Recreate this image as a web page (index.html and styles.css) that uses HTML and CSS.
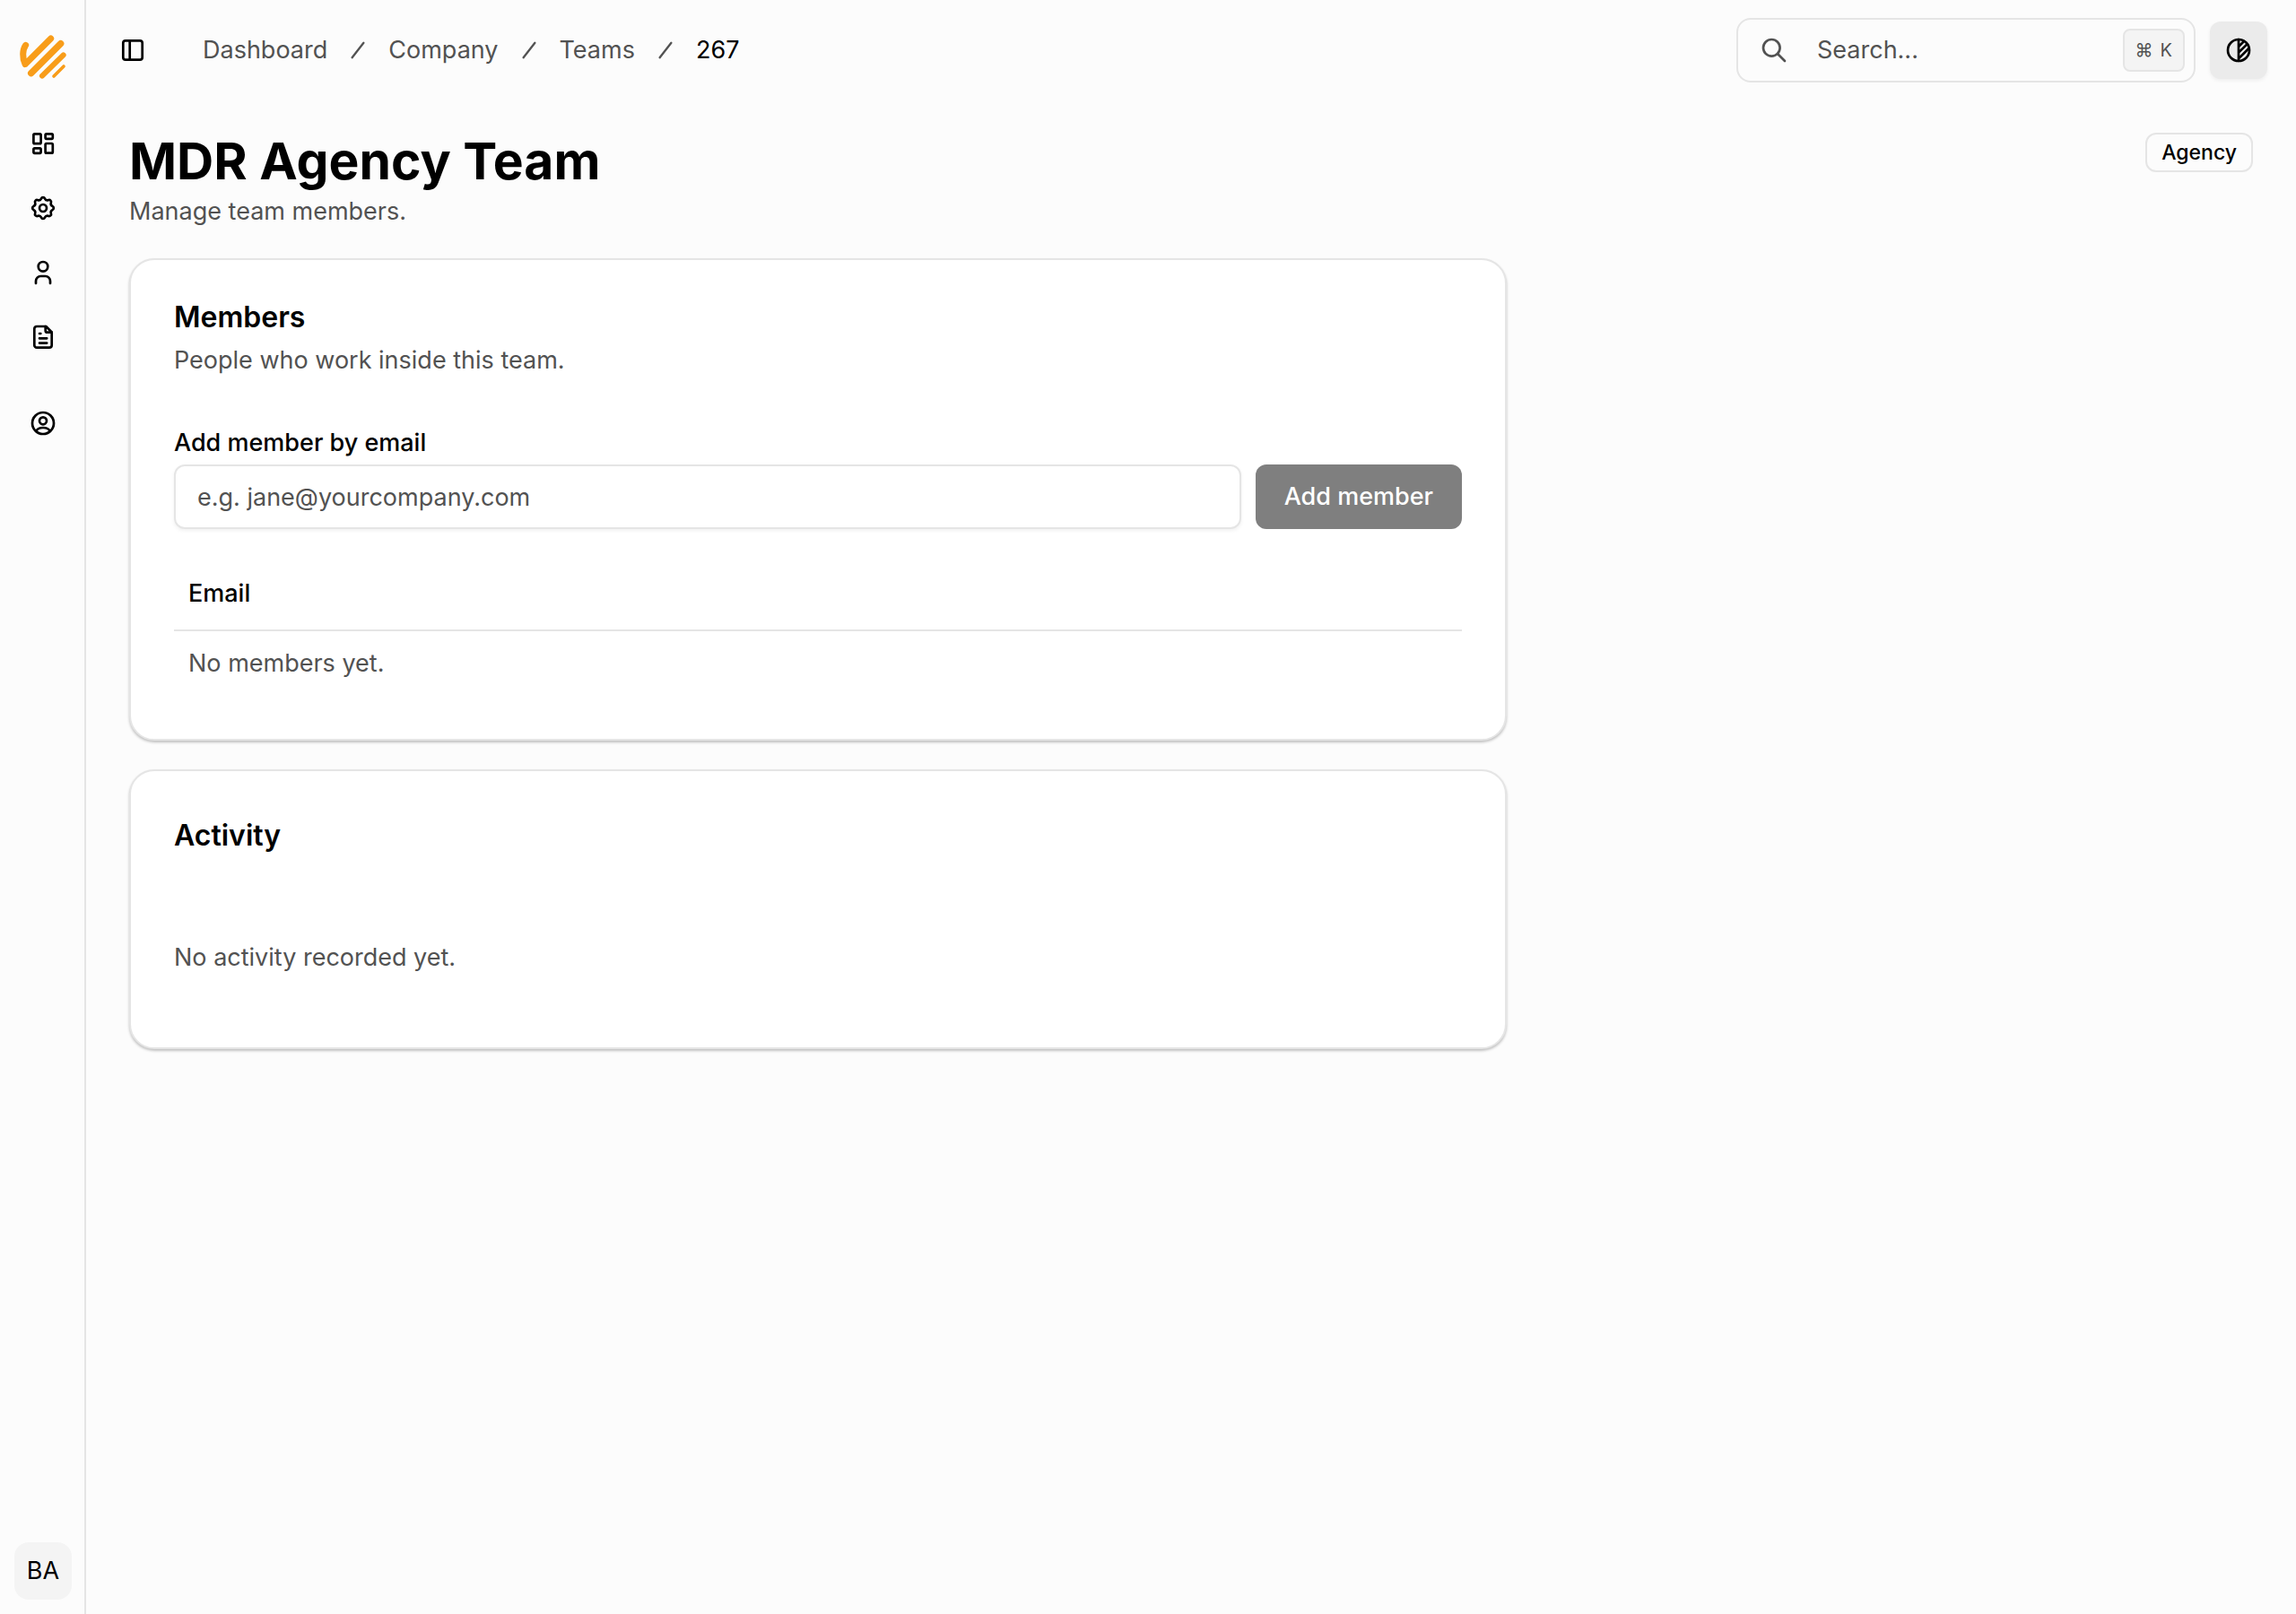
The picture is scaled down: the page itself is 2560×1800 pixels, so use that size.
FILE: index.html
```html
<!DOCTYPE html>
<html lang="en">
<head>
    <meta charset="UTF-8">
    <meta name="viewport" content="width=device-width, initial-scale=1.0">
    <title>MDR Agency Team</title>
    <link rel="stylesheet" href="styles.css">
</head>
<body>
    <!-- Sidebar -->
    <aside class="sidebar">
        <a class="logo" href="#" aria-label="Home">
            <svg viewBox="60 50 168 160" fill="none" stroke="currentColor" stroke-linecap="round" stroke-linejoin="round">
                <path stroke-width="21" d="M86 92C75 108 74 134 84 156L170 70"/>
                <path stroke-width="22" d="M203 87L104 186"/>
                <path stroke-width="18" d="M212 125L141 195"/>
                <path stroke-width="11" d="M213 163L180 196"/>
            </svg>
        </a>
        <nav class="side-nav">
            <a href="#" aria-label="Dashboard">
                <svg class="icon" viewBox="0 0 32 32">
                    <rect x="5.4" y="5.4" width="8.2" height="10.7" rx="1.2"/>
                    <rect x="18.6" y="5.4" width="8.2" height="5.4" rx="1.2"/>
                    <rect x="18.6" y="16" width="8.2" height="10.7" rx="1.2"/>
                    <rect x="5.4" y="21.4" width="8.2" height="5.4" rx="1.2"/>
                </svg>
            </a>
            <a href="#" aria-label="Settings">
                <svg class="icon" viewBox="0 0 24 24" stroke-width="2">
                    <path d="M10.44 4.15A1.7 1.7 0 0 1 13.56 4.15A2.4 2.4 0 0 0 16.44 5.35A1.7 1.7 0 0 1 18.65 7.56A2.4 2.4 0 0 0 19.85 10.44A1.7 1.7 0 0 1 19.85 13.56A2.4 2.4 0 0 0 18.65 16.44A1.7 1.7 0 0 1 16.44 18.65A2.4 2.4 0 0 0 13.56 19.85A1.7 1.7 0 0 1 10.44 19.85A2.4 2.4 0 0 0 7.56 18.65A1.7 1.7 0 0 1 5.35 16.44A2.4 2.4 0 0 0 4.15 13.56A1.7 1.7 0 0 1 4.15 10.44A2.4 2.4 0 0 0 5.35 7.56A1.7 1.7 0 0 1 7.56 5.35A2.4 2.4 0 0 0 10.44 4.15Z"/>
                    <circle cx="12" cy="12" r="3"/>
                </svg>
            </a>
            <a href="#" aria-label="Users">
                <svg class="icon" viewBox="0 0 32 32">
                    <circle cx="16" cy="9.3" r="5.3"/>
                    <path d="M8 28v-2.6a5.4 5.4 0 0 1 5.4-5.4h5.2a5.4 5.4 0 0 1 5.4 5.4V28"/>
                </svg>
            </a>
            <a href="#" aria-label="Documents">
                <svg class="icon" viewBox="0 0 32 32">
                    <path d="M18.7 4v4.7a2 2 0 0 0 2 2h4.9"/>
                    <path d="M9 4h10.3l6.4 6.5V25a2.7 2.7 0 0 1-2.7 2.7H9A2.7 2.7 0 0 1 6.3 25V6.7A2.7 2.7 0 0 1 9 4z"/>
                    <path d="M12 12h1.3M12 17.3h8.2M12 22.6h8.2"/>
                </svg>
            </a>
            <a class="account" href="#" aria-label="Account">
                <svg class="icon" viewBox="0 0 32 32">
                    <circle cx="16" cy="16" r="12"/>
                    <circle cx="16" cy="13.3" r="4"/>
                    <path d="M8.3 25c1.2-3 4-4 7.7-4s6.5 1 7.7 4"/>
                </svg>
            </a>
        </nav>
        <button class="avatar">BA</button>
    </aside>

    <div class="page">
        <header class="topbar">
            <button class="toggle" aria-label="Toggle sidebar">
                <svg class="icon" viewBox="0 0 32 32">
                    <rect x="5.3" y="5.3" width="21.4" height="21.4" rx="2.7"/>
                    <path d="M12.7 5.3v21.4"/>
                </svg>
            </button>
            <nav class="breadcrumb" aria-label="Breadcrumb">
                <a href="#">Dashboard</a>
                <svg class="slash" viewBox="0 0 24 24"><path d="M17.5 5L6.5 19"/></svg>
                <a href="#">Company</a>
                <svg class="slash" viewBox="0 0 24 24"><path d="M17.5 5L6.5 19"/></svg>
                <a href="#">Teams</a>
                <svg class="slash" viewBox="0 0 24 24"><path d="M17.5 5L6.5 19"/></svg>
                <span class="current">267</span>
            </nav>
            <div class="search">
                <label for="search" aria-label="Search">
                    <svg class="icon" viewBox="0 0 32 32">
                        <circle cx="13.3" cy="13.3" r="9.3"/>
                        <path d="M28 28l-8-8"/>
                    </svg>
                </label>
                <input type="text" id="search" placeholder="Search...">
                <kbd><span>⌘</span><span>K</span></kbd>
            </div>
            <button class="theme" aria-label="Toggle theme">
                <svg class="icon" viewBox="0 0 24 24" stroke-width="2">
                    <circle cx="12" cy="12" r="9"/>
                    <path d="M12 3v18M12 14l7-7M12 19l8.5-8.5M12 9l4.5-4.5"/>
                </svg>
            </button>
        </header>

        <main class="content">
            <div class="page-head">
                <div>
                    <h1>MDR Agency Team</h1>
                    <p class="muted">Manage team members.</p>
                </div>
                <span class="badge">Agency</span>
            </div>

            <!-- Members -->
            <section class="card">
                <h2>Members</h2>
                <p class="muted description">People who work inside this team.</p>
                <form class="member-form">
                    <label for="email">Add member by email</label>
                    <div class="form-row">
                        <input type="email" id="email" placeholder="e.g. jane@yourcompany.com">
                        <button type="submit" disabled>Add member</button>
                    </div>
                </form>
                <table class="members">
                    <thead>
                        <tr><th>Email</th></tr>
                    </thead>
                    <tbody>
                        <tr><td>No members yet.</td></tr>
                    </tbody>
                </table>
            </section>

            <!-- Activity -->
            <section class="card activity">
                <h2>Activity</h2>
                <p class="muted empty">No activity recorded yet.</p>
            </section>
        </main>
    </div>
</body>
</html>
```
FILE: styles.css
```css
* {
    box-sizing: border-box;
}
body {
    margin: 0;
    min-height: 100vh;
    display: flex;
    font-family: Inter, "Liberation Sans", sans-serif;
    font-size: 27px;
    line-height: 40px;
    color: #000;
    background-color: #fcfcfc;
}
h1, h2, p {
    margin: 0;
}
a {
    color: inherit;
    text-decoration: none;
}
button, input {
    font: inherit;
    color: inherit;
}
button {
    border: none;
    padding: 0;
    cursor: pointer;
}
.icon {
    display: block;
    width: 32px;
    height: 32px;
    fill: none;
    stroke: #000;
    stroke-linecap: round;
    stroke-linejoin: round;
}
.icon[viewBox="0 0 32 32"] {
    stroke-width: 2.7;
}
.muted {
    color: #525252;
}

/* Sidebar */
.sidebar {
    width: 96px;
    height: 100vh;
    position: sticky;
    top: 0;
    flex-shrink: 0;
    display: flex;
    flex-direction: column;
    align-items: center;
    padding: 36px 0 16px 2px;
    border-right: 2px solid #e5e5e5;
}
.logo {
    color: #f89d1a;
}
.logo svg {
    display: block;
    width: 56px;
    height: 54px;
}
.side-nav {
    display: flex;
    flex-direction: column;
    gap: 8px;
    margin-top: 38px;
}
.side-nav a {
    padding: 16px;
}
.side-nav .account {
    margin-top: 24px;
}
.avatar {
    width: 64px;
    height: 64px;
    margin-top: auto;
    border-radius: 16px;
    background-color: #f4f4f4;
}

/* Top bar */
.page {
    flex: 1;
    min-width: 0;
}
.topbar {
    display: flex;
    align-items: center;
    height: 112px;
    padding: 0 32px 0 36px;
}
.toggle {
    background: none;
}
.breadcrumb {
    display: flex;
    align-items: center;
    gap: 20px;
    margin-left: 62px;
    color: #525252;
}
.breadcrumb .current {
    color: #000;
}
.slash {
    width: 28px;
    height: 28px;
    fill: none;
    stroke: #525252;
    stroke-width: 2;
    stroke-linecap: round;
}
.search {
    display: flex;
    align-items: center;
    width: 512px;
    height: 72px;
    margin-left: auto;
    padding: 0 10px 0 24px;
    border: 2px solid #e5e5e5;
    border-radius: 16px;
}
.search .icon {
    stroke: #525252;
}
.search input {
    flex: 1;
    min-width: 0;
    margin-left: 32px;
    padding: 0;
    border: none;
    outline: none;
    background: none;
}
input::placeholder {
    color: #525252;
    opacity: 1;
}
.search kbd {
    display: flex;
    align-items: center;
    gap: 8px;
    height: 48px;
    padding: 0 12px;
    border: 2px solid #e5e5e5;
    border-radius: 8px;
    background-color: #f4f4f4;
    color: #525252;
    font-family: inherit;
    font-size: 20px;
}
.theme {
    display: flex;
    align-items: center;
    justify-content: center;
    width: 64px;
    height: 64px;
    margin-left: 16px;
    border-radius: 12px;
    background-color: #ebebeb;
    box-shadow: 0 2px 4px rgba(0, 0, 0, 0.06);
}

/* Page content */
.content {
    display: flex;
    flex-direction: column;
    gap: 32px;
    padding: 32px 48px;
}
.page-head {
    display: flex;
    justify-content: space-between;
    align-items: flex-start;
}
h1 {
    font-size: 57px;
    line-height: 72px;
    font-weight: 700;
}
.badge {
    margin-top: 4px;
    padding: 0 16px;
    border: 2px solid #e5e5e5;
    border-radius: 12px;
    font-size: 23px;
    font-weight: 500;
}

/* Cards */
.card {
    width: 100%;
    max-width: 1536px;
    padding: 48px;
    border: 2px solid #e5e5e5;
    border-radius: 28px;
    background-color: #fff;
    box-shadow: 0 2px 3px rgba(0, 0, 0, 0.24);
}
h2 {
    font-size: 32px;
    line-height: 32px;
    font-weight: 600;
}
.description {
    margin-top: 12px;
}
.member-form {
    margin-top: 52px;
}
.member-form label {
    display: block;
    font-weight: 500;
}
.form-row {
    display: flex;
    gap: 16px;
    margin-top: 4px;
}
.form-row input {
    flex: 1;
    min-width: 0;
    height: 72px;
    padding: 0 24px;
    border: 2px solid #e5e5e5;
    border-radius: 12px;
    background-color: #fff;
    box-shadow: 0 2px 4px rgba(0, 0, 0, 0.06);
}
.form-row button {
    padding: 0 32px;
    border-radius: 12px;
    background-color: #7f7f7f;
    color: #fff;
    font-weight: 500;
}
.members {
    width: 100%;
    margin-top: 32px;
    border-collapse: collapse;
}
.members th {
    padding: 20px 16px;
    border-bottom: 2px solid #e5e5e5;
    text-align: left;
    font-weight: 500;
}
.members td {
    padding: 16px;
    color: #525252;
}
.activity h2 {
    line-height: 48px;
}
.empty {
    margin-top: 60px;
    padding: 32px 0;
}
```
